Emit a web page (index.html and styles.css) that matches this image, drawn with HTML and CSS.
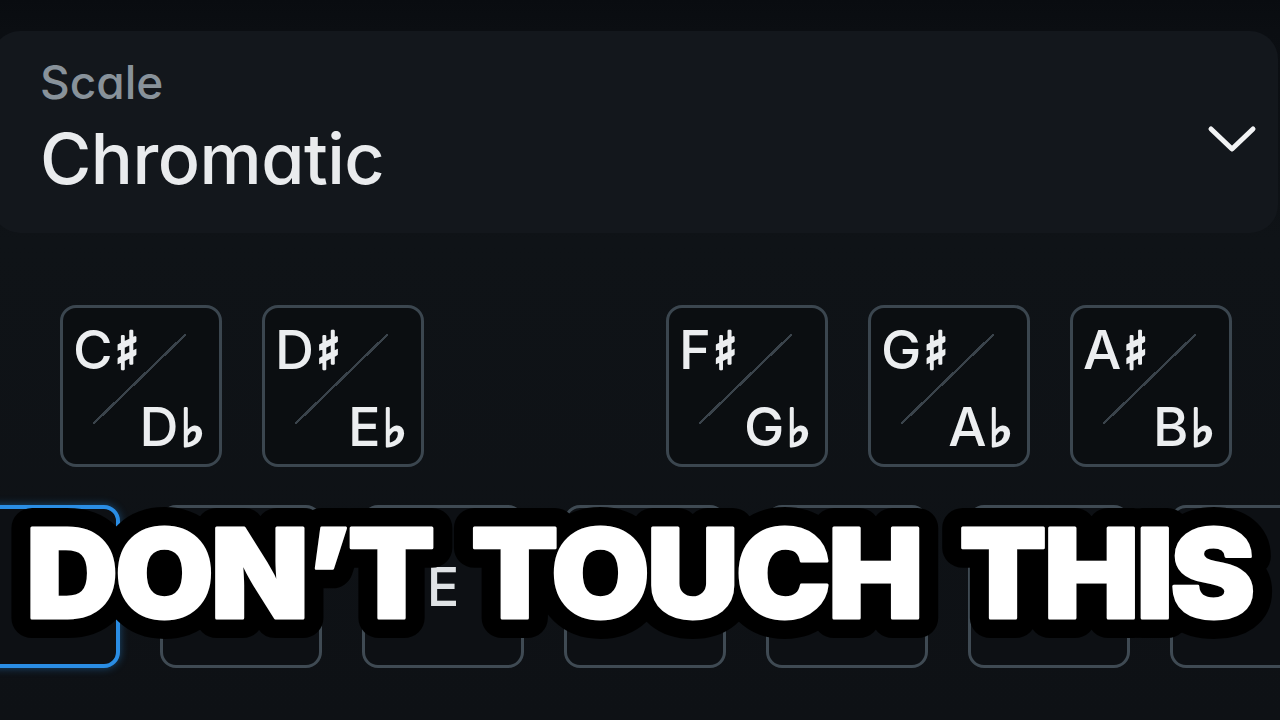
FILE: index.html
```html
<!DOCTYPE html>
<html>
<head>
<meta charset="utf-8">
<link rel="stylesheet" href="styles.css">
</head>
<body>
<div class="page">
  <div class="card">
    <div class="card-text">
      <div class="label">Scale</div>
      <div class="value">Chromatic</div>
    </div>
    <svg class="chevron" width="52" height="34" viewBox="0 0 52 34">
      <path d="M5 7 L26 27 L47 7" fill="none" stroke="#f2f3f4" stroke-width="5" stroke-linecap="round" stroke-linejoin="round"/>
    </svg>
  </div>

  <div class="row black-row">
    <div class="key black"><span class="top">C<span class="acc">♯</span></span><span class="bot">D<span class="acc">♭</span></span></div>
    <div class="key black"><span class="top">D<span class="acc">♯</span></span><span class="bot">E<span class="acc">♭</span></span></div>
    <div class="key spacer"></div>
    <div class="key black"><span class="top">F<span class="acc">♯</span></span><span class="bot">G<span class="acc">♭</span></span></div>
    <div class="key black"><span class="top">G<span class="acc">♯</span></span><span class="bot">A<span class="acc">♭</span></span></div>
    <div class="key black"><span class="top">A<span class="acc">♯</span></span><span class="bot">B<span class="acc">♭</span></span></div>
  </div>

  <div class="row white-row">
    <div class="key white active"><span class="name">C</span></div>
    <div class="key white"><span class="name">D</span></div>
    <div class="key white"><span class="name">E</span></div>
    <div class="key white"><span class="name">F</span></div>
    <div class="key white"><span class="name">G</span></div>
    <div class="key white"><span class="name">A</span></div>
    <div class="key white"><span class="name">B</span></div>
  </div>
</div>

<svg class="overlay" width="1280" height="200" viewBox="0 0 1280 200">
  <text x="26" y="138" textLength="1226" lengthAdjust="spacingAndGlyphs" class="overlay-text outline">DON’T TOUCH THIS</text>
  <text x="26" y="138" textLength="1226" lengthAdjust="spacingAndGlyphs" class="overlay-text fillpass">DON’T TOUCH THIS</text>
</svg>
</body>
</html>
```

FILE: styles.css
```css
* { box-sizing: border-box; }

html, body {
  margin: 0;
  padding: 0;
}

body {
  width: 1280px;
  height: 720px;
  overflow: hidden;
  position: relative;
  background: linear-gradient(to bottom, #090c10 0px, #0b0e12 30px, #0f1317 240px, #0e1115 720px);
  font-family: "Inter", "DejaVu Sans", sans-serif;
  font-feature-settings: "cv11" 1;
}

.page {
  padding-top: 31px;
}

.card {
  margin-left: -8px;
  width: 1286px;
  height: 202px;
  border-radius: 28px;
  background: #13171c;
  display: flex;
  align-items: flex-start;
  justify-content: space-between;
  padding: 23px 20px 0 48px;
}

.card-text {
  display: flex;
  flex-direction: column;
}

.label {
  font-size: 46px;
  line-height: 56px;
  margin-bottom: 11px;
  color: #88929a;
  font-weight: 500;
}

.value {
  font-size: 70px;
  line-height: 76px;
  color: #e9ebed;
  font-weight: 500;
  letter-spacing: -0.5px;
}

.chevron {
  margin-top: 68px;
}

.row {
  display: flex;
  gap: 40px;
}

.black-row {
  margin-top: 72px;
  padding-left: 60px;
}

.white-row {
  margin-top: 38px;
  margin-left: -42px;
}

.key {
  flex: 0 0 162px;
  height: 162px;
  border-radius: 16px;
  border: 3px solid #3b464f;
  background: #0b0e11;
  position: relative;
  color: #eceef0;
}

.key.spacer {
  visibility: hidden;
}

.key.black {
  display: flex;
  flex-direction: column;
  justify-content: space-between;
  padding: 12px 14px 6px 10px;
}

.key.black::before {
  content: "";
  position: absolute;
  left: 30px;
  top: 26px;
  right: 33px;
  bottom: 40px;
  background: linear-gradient(to bottom right, transparent calc(50% - 1.2px), #3a434b calc(50% - 1.2px), #3a434b calc(50% + 1.2px), transparent calc(50% + 1.2px));
}

.key .top,
.key .bot {
  font-size: 54px;
  line-height: 60px;
  position: relative;
  font-weight: 500;
}

.key .top {
  align-self: flex-start;
}

.key .bot {
  align-self: flex-end;
}

.acc {
  font-family: "DejaVu Sans", sans-serif;
  font-weight: normal;
  font-size: 52px;
  color: #eceef0;
  -webkit-text-stroke: 2.5px #eceef0;
  margin-left: 2px;
}

.key.white {
  height: 163px;
  display: flex;
  align-items: center;
  justify-content: center;
  border-color: #3f4a53;
  background: #0d1014;
}

.key.white .name {
  font-size: 54px;
  color: #dfe2e5;
  font-weight: 500;
}

.key.active {
  border: 4px solid #2a8de4;
  box-shadow: 0 0 8px rgba(42, 141, 228, 0.45);
}

.overlay {
  position: absolute;
  left: 0;
  top: 480px;
}

.overlay-text {
  font-family: "Inter", "Roboto", sans-serif;
  font-weight: 900;
  font-size: 124px;
  letter-spacing: -3px;
  word-spacing: 16px;
  stroke-linejoin: round;
}

.overlay-text.outline {
  fill: #000000;
  stroke: #000000;
  stroke-width: 40px;
}

.overlay-text.fillpass {
  fill: #ffffff;
  stroke: #ffffff;
  stroke-width: 3px;
}
```
